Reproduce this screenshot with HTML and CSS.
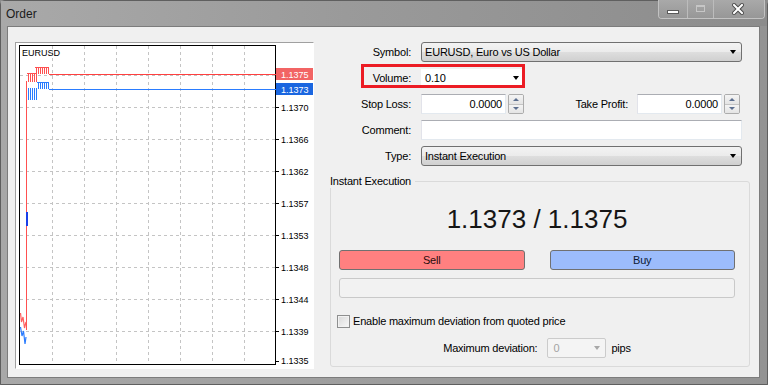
FILE: index.html
```html
<!DOCTYPE html>
<html>
<head>
<meta charset="utf-8">
<title>Order</title>
<link rel="stylesheet" href="styles.css">
</head>
<body>
<div class="window">
  <div class="titlebar">
    <span class="title">Order</span>
    <div class="caption">
      <span class="cbtn cmin"><span class="glyph-min"></span></span>
      <span class="cbtn cmax"><span class="glyph-max"></span></span>
      <span class="cbtn cclose">
        <svg width="12" height="12" viewBox="0 0 12 12">
          <path d="M2 2L10 10M10 2L2 10" stroke="#4a4a4a" stroke-width="4" stroke-linecap="square"/>
          <path d="M2 2L10 10M10 2L2 10" stroke="#ffffff" stroke-width="2" stroke-linecap="square"/>
        </svg>
      </span>
    </div>
  </div>
  <div class="client">
    <div class="chart">
      <svg class="chart-svg" width="297" height="325" viewBox="0 0 297 325">
        <defs>
          <pattern id="redbars" x="0" y="0" width="2" height="20" patternUnits="userSpaceOnUse">
            <rect x="0" y="0" width="1" height="20" fill="#ff5050"/>
          </pattern>
          <pattern id="bluebars" x="0" y="0" width="2" height="20" patternUnits="userSpaceOnUse">
            <rect x="0" y="0" width="1" height="20" fill="#2a7cff"/>
          </pattern>
        </defs>
        <rect x="0" y="0" width="297" height="325" fill="#fff"/>
        <g stroke="#c4c4c4" stroke-width="1" stroke-dasharray="3 3">
          <path d="M36.5 3V321M68.5 3V321M100.5 3V321M132.5 3V321M164.5 3V321M196.5 3V321M228.5 3V321"/>
          <path d="M4 32.5H259M4 64.5H259M4 96.5H259M4 128.5H259M4 160.5H259M4 192.5H259M4 224.5H259M4 256.5H259M4 288.5H259"/>
        </g>
        <rect x="3.5" y="2.5" width="256" height="319" fill="none" stroke="#000"/>
        <path d="M260 64.5h3M260 96.5h3M260 128.5h3M260 160.5h3M260 192.5h3M260 224.5h3M260 256.5h3M260 288.5h3M260 318.5h3" stroke="#000"/>
        <g class="axis">
          <text x="265" y="68">1.1370</text>
          <text x="265" y="100">1.1366</text>
          <text x="265" y="132">1.1362</text>
          <text x="265" y="164">1.1357</text>
          <text x="265" y="196">1.1353</text>
          <text x="265" y="228">1.1348</text>
          <text x="265" y="260">1.1344</text>
          <text x="265" y="292">1.1339</text>
          <text x="265" y="321">1.1335</text>
        </g>
        <text class="sym" x="6" y="13">EURUSD</text>
        <!-- ask (red) -->
        <rect x="19" y="24" width="15" height="7" fill="url(#redbars)"/>
        <path d="M19 24.5H33" stroke="#ff5050"/>
        <rect x="11" y="30" width="10" height="9" fill="url(#redbars)"/>
        <path d="M11 30.5H20" stroke="#ff5050"/>
        <rect x="10" y="38" width="1" height="249" fill="#ff5050"/>
        <path d="M33 31.5H260" stroke="#ff4040" shape-rendering="crispEdges"/>
        <polyline points="4.5,270 5.5,279 7,274 8.5,285 10,279" fill="none" stroke="#ff6060" stroke-width="1.2"/>
        <!-- bid (blue) -->
        <rect x="21" y="39" width="13" height="7" fill="url(#bluebars)"/>
        <path d="M21 39.5H33" stroke="#2a7cff"/>
        <rect x="12" y="45" width="10" height="12" fill="url(#bluebars)"/>
        <rect x="10" y="169" width="2" height="14" fill="#1a40e8"/>
        <path d="M33 46.5H260" stroke="#2a7cff" shape-rendering="crispEdges"/>
        <polyline points="4.5,284 6,293 7.5,288 9,301 10,294" fill="none" stroke="#2a7cff" stroke-width="1.2"/>
        <rect x="260" y="25" width="37" height="12" fill="#f26464"/>
        <text class="tag" x="265" y="34.5">1.1375</text>
        <rect x="260" y="40" width="37" height="12" fill="#1a66e0"/>
        <text class="tag" x="265" y="49.5">1.1373</text>
      </svg>
    </div>
    <div class="form">
      <div class="row">
        <span class="lbl">Symbol:</span>
        <div class="combo field-wide"><span>EURUSD, Euro vs US Dollar</span><span class="arrow"></span></div>
      </div>
      <div class="row vol">
        <span class="lbl">Volume:</span>
        <div class="vcombo"><span>0.10</span><span class="arrow"></span></div>
        <span class="highlight"></span>
      </div>
      <div class="row">
        <span class="lbl">Stop Loss:</span>
        <div class="edit num">0.0000</div>
        <div class="spin"><span class="up"></span><span class="dn"></span></div>
        <span class="lbl2">Take Profit:</span>
        <div class="edit num">0.0000</div>
        <div class="spin"><span class="up"></span><span class="dn"></span></div>
      </div>
      <div class="row">
        <span class="lbl">Comment:</span>
        <div class="edit field-wide"></div>
      </div>
      <div class="row">
        <span class="lbl">Type:</span>
        <div class="combo field-wide"><span>Instant Execution</span><span class="arrow"></span></div>
      </div>
      <div class="group">
        <span class="group-title">Instant Execution</span>
        <div class="price">1.1373 / 1.1375</div>
        <div class="actions">
          <button class="btn sell">Sell</button>
          <button class="btn buy">Buy</button>
        </div>
        <div class="status"></div>
        <div class="check"><span class="box"></span><span>Enable maximum deviation from quoted price</span></div>
        <div class="maxdev">
          <span>Maximum deviation:</span>
          <div class="dcombo"><span>0</span><span class="arrow dis"></span></div>
          <span>pips</span>
        </div>
      </div>
    </div>
  </div>
</div>
</body>
</html>
```
FILE: styles.css
```css
* { box-sizing: border-box; }
html, body { margin: 0; padding: 0; }
body {
  width: 768px;
  height: 385px;
  overflow: hidden;
  background: #8c8c8c;
  font-family: "Liberation Sans", Arial, sans-serif;
  font-size: 11px;
  letter-spacing: -0.2px;
  color: #000;
}

.window {
  width: 768px;
  height: 385px;
  display: flex;
  flex-direction: column;
  background: linear-gradient(to right, #a8a8a8, #9d9d9d 50%, #939393);
  border: 1px solid #5f5f5f;
  border-radius: 5px 5px 0 0;
}

.titlebar {
  height: 25px;
  display: flex;
  align-items: flex-start;
  background: linear-gradient(to right, #a9a9a9, #9a9a9a 45%, #8c8c8c);
}
.title {
  margin: 6px 0 0 5px;
  font-size: 12px;
  line-height: 14px;
  letter-spacing: 0;
  color: #1b1b1b;
}
.caption {
  margin: -1px 2px 0 auto;
  display: flex;
  height: 19px;
  border: 1px solid #c2c2c2;
  border-top: none;
  border-radius: 0 0 4px 4px;
  overflow: hidden;
}
.cbtn {
  height: 18px;
  display: flex;
  align-items: center;
  justify-content: center;
  background: linear-gradient(#a9a9a9, #979797);
}
.cmin { width: 29px; border-right: 1px solid #bcbcbc; }
.cmax { width: 26px; border-right: 1px solid #bcbcbc; }
.cclose { width: 50px; padding-right: 3px; }
.glyph-min {
  width: 12px;
  height: 4px;
  margin-top: 6px;
  background: #fff;
  border: 1px solid #5a5a5a;
}
.glyph-max {
  width: 9px;
  height: 7px;
  margin-top: -1px;
  border: 1px solid #c6c6c6;
  border-top-width: 2px;
}

.client {
  margin-left: 6px;
  width: 753px;
  height: 352px;
  background: #f0f0f0;
  border: 1px solid #7c7c7c;
  display: flex;
  padding: 15px 0 0 7px;
}

.chart {
  width: 299px;
  height: 327px;
  flex: none;
  border: 1px solid;
  border-color: #a0a0a0 #ffffff #ffffff #a0a0a0;
  background: #fff;
}
.chart-svg { display: block; }
.chart-svg text {
  font-family: "Liberation Sans", Arial, sans-serif;
  font-size: 9px;
  letter-spacing: 0;
  fill: #000;
}
.chart-svg text.tag { fill: #fff; }

.form {
  margin-left: 16px;
  width: 420px;
  flex: none;
  display: flex;
  flex-direction: column;
}
.row {
  position: relative;
  display: flex;
  align-items: center;
  height: 20px;
  margin-bottom: 6px;
}
.lbl {
  width: 81px;
  flex: none;
  text-align: right;
  margin-right: 10px;
}
.lbl2 {
  width: 104px;
  flex: none;
  text-align: right;
  margin-right: 9px;
}
.field-wide { width: 321px; }

.combo {
  height: 20px;
  border: 1px solid #707070;
  border-radius: 3px;
  background: linear-gradient(#f3f3f3, #ebebeb 50%, #dedede 50%, #d0d0d0);
  display: flex;
  align-items: center;
  justify-content: space-between;
  padding: 0 5px 0 3px;
}
.arrow {
  width: 0;
  height: 0;
  border-left: 3.5px solid transparent;
  border-right: 3.5px solid transparent;
  border-top: 4px solid #000;
}
.arrow.dis { border-top-color: #a8a8a8; }

.vcombo {
  width: 101px;
  height: 18px;
  background: #fff;
  display: flex;
  align-items: center;
  justify-content: space-between;
  padding: 0 3px 0 4px;
}
.highlight {
  position: absolute;
  left: 31px;
  top: -4px;
  width: 164px;
  height: 24px;
  border: 3px solid #ec1c24;
}

.edit {
  height: 20px;
  background: #fff;
  border: 1px solid;
  border-color: #abadb3 #e3e9ef #e3e9ef #e2e3ea;
  display: flex;
  align-items: center;
}
.edit.num {
  width: 85px;
  justify-content: flex-end;
  padding-right: 3px;
}
.spin {
  width: 16px;
  height: 20px;
  margin-left: 2px;
  flex: none;
  display: flex;
  flex-direction: column;
  border: 1px solid #acacac;
  border-radius: 2px;
  overflow: hidden;
}
.spin span {
  flex: 1;
  display: flex;
  align-items: center;
  justify-content: center;
  background: linear-gradient(#f4f4f4, #e4e4e4);
}
.spin span.up { border-bottom: 1px solid #c4c4c4; }
.spin span::before {
  content: "";
  width: 0;
  height: 0;
  border-left: 3px solid transparent;
  border-right: 3px solid transparent;
}
.spin span.up::before { border-bottom: 3px solid #5c6f8f; }
.spin span.dn::before { border-top: 3px solid #5c6f8f; }

.group {
  margin-top: 9px;
  height: 186px;
  border: 1px solid #dadada;
  border-radius: 3px;
  display: flex;
  flex-direction: column;
  padding: 0 14px 0 8px;
}
.group-title {
  align-self: flex-start;
  margin: -7px 0 0 -9px;
  padding-right: 4px;
  line-height: 13px;
  background: #f0f0f0;
}
.price {
  margin-top: 16px;
  height: 30px;
  font-size: 26px;
  line-height: 30px;
  letter-spacing: 0;
  text-align: center;
  color: #151515;
}
.actions {
  margin-top: 16px;
  display: grid;
  grid-template-columns: 1fr 1fr;
  column-gap: 25px;
  height: 20px;
}
.btn {
  font: inherit;
  letter-spacing: -0.2px;
  height: 20px;
  padding: 0;
  border: 1px solid #707070;
  border-radius: 3px;
}
.sell { background: #ff8080; color: #2a0d0d; }
.buy { background: #9cbcfb; color: #0d1a33; }
.status {
  margin-top: 8px;
  height: 20px;
  border: 1px solid #c9c9c9;
  border-radius: 3px;
  background: #f2f2f2;
}
.check {
  margin: 16px 0 0 -2px;
  height: 14px;
  display: flex;
  align-items: center;
}
.box {
  width: 13px;
  height: 13px;
  margin-right: 3px;
  border: 1px solid #8e8f8f;
  background: linear-gradient(135deg, #d8d8d8, #f8f8f8);
  box-shadow: inset 0 0 0 1px #f2f2f2;
}
.maxdev {
  margin-top: 10px;
  height: 20px;
  display: flex;
  align-items: center;
  justify-content: center;
}
.dcombo {
  width: 59px;
  height: 20px;
  margin: 0 5px 0 10px;
  border: 1px solid #cbcbcb;
  border-radius: 2px;
  background: #f4f4f4;
  color: #a3a3a3;
  display: flex;
  align-items: center;
  justify-content: space-between;
  padding: 0 5px 0 5px;
}
```
